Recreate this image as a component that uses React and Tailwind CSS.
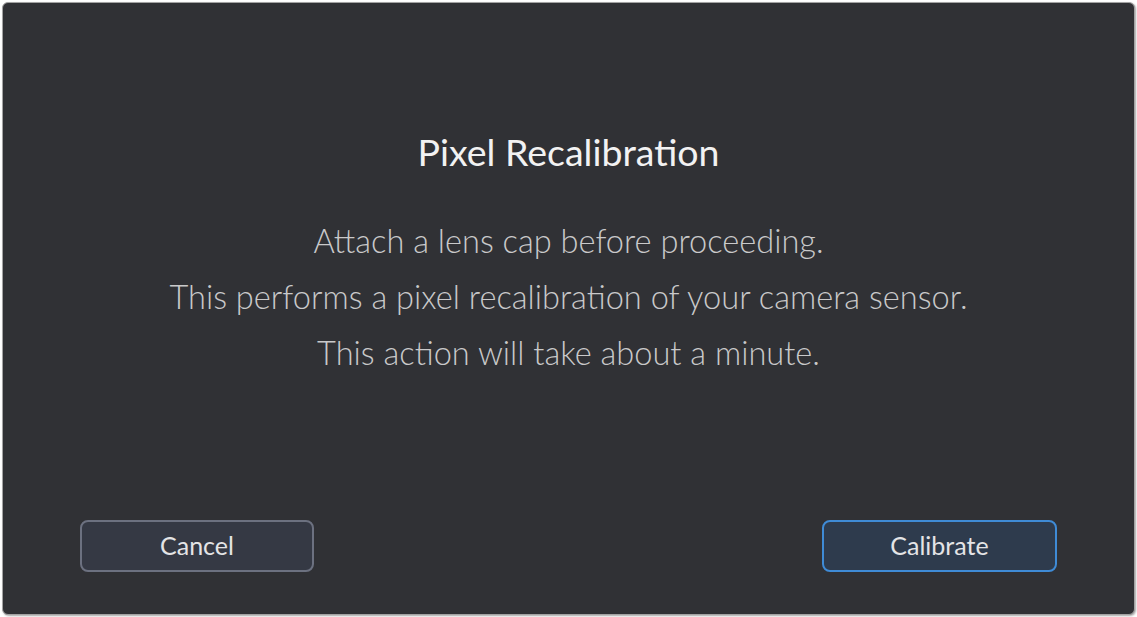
export default function App() {
  return (
    <div className="h-screen w-screen bg-white p-[2px]" style={{ fontFamily: 'Lato, "Noto Sans", sans-serif' }}>
      <div className="flex h-full flex-col rounded-md border border-[#a3a3a3] bg-[#303135] px-[77px] pt-[126px] pb-[42px] shadow-[1px_1px_2px_rgba(0,0,0,0.35)]">
        <h1 className="text-center text-[37.5px] leading-[46px] text-[#f2f2f2]">Pixel Recalibration</h1>

        <div className="mt-[38px] flex flex-col items-center text-[32.6px] leading-[56px] font-light text-[#c9c9ca]">
          <p>Attach a lens cap before proceeding.</p>
          <p>This performs a pixel recalibration of your camera sensor.</p>
          <p>This action will take about a minute.</p>
        </div>

        <div className="mt-auto flex items-center justify-between">
          <button className="h-[52px] w-[234px] rounded-lg border-2 border-[#6c7180] bg-[#353944] text-[25px] text-[#e4e4e6]">
            Cancel
          </button>
          <button className="h-[52px] w-[235px] rounded-lg border-2 border-[#3f8bd6] bg-[#2e3b4d] text-[25px] text-[#e4e4e6]">
            Calibrate
          </button>
        </div>
      </div>
    </div>
  )
}
